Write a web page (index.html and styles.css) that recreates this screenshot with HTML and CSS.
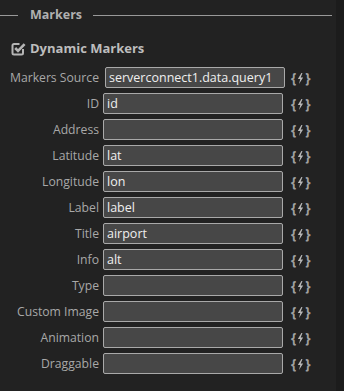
FILE: index.html
```html
<!DOCTYPE html>
<html>
<head>
	<meta charset="UTF-8">
	<title>Markers</title>
	<link rel="stylesheet" href="styles.css">
</head>
<body>
	<div class="panel">
		<fieldset class="group">
			<legend>Markers</legend>
			<div class="toggle">
				<svg class="check" width="15" height="15" viewBox="0 0 15 15">
					<path d="M12 8v4a1.5 1.5 0 0 1-1.5 1.5H3A1.5 1.5 0 0 1 1.5 12V4.5A1.5 1.5 0 0 1 3 3h5.5" fill="none" stroke="#b5b5b5" stroke-width="2"/>
					<path d="M4.2 7l2.8 2.8L13.6 3.2" fill="none" stroke="#b5b5b5" stroke-width="2.6"/>
				</svg>
				<span>Dynamic Markers</span>
			</div>
			<div class="rows">
				<label class="first">Markers Source</label>
				<input class="first" type="text" value="serverconnect1.data.query1">
				<span class="bind">{<svg viewBox="0 0 6 10"><path d="M3.8 0L0.6 5.4h2.2L1.6 10 5.4 4.2H3.2L4.8 0z"/></svg>}</span>

				<label>ID</label>
				<input type="text" value="id">
				<span class="bind">{<svg viewBox="0 0 6 10"><path d="M3.8 0L0.6 5.4h2.2L1.6 10 5.4 4.2H3.2L4.8 0z"/></svg>}</span>

				<label>Address</label>
				<input type="text" value="">
				<span class="bind">{<svg viewBox="0 0 6 10"><path d="M3.8 0L0.6 5.4h2.2L1.6 10 5.4 4.2H3.2L4.8 0z"/></svg>}</span>

				<label>Latitude</label>
				<input type="text" value="lat">
				<span class="bind">{<svg viewBox="0 0 6 10"><path d="M3.8 0L0.6 5.4h2.2L1.6 10 5.4 4.2H3.2L4.8 0z"/></svg>}</span>

				<label>Longitude</label>
				<input type="text" value="lon">
				<span class="bind">{<svg viewBox="0 0 6 10"><path d="M3.8 0L0.6 5.4h2.2L1.6 10 5.4 4.2H3.2L4.8 0z"/></svg>}</span>

				<label>Label</label>
				<input type="text" value="label">
				<span class="bind">{<svg viewBox="0 0 6 10"><path d="M3.8 0L0.6 5.4h2.2L1.6 10 5.4 4.2H3.2L4.8 0z"/></svg>}</span>

				<label>Title</label>
				<input type="text" value="airport">
				<span class="bind">{<svg viewBox="0 0 6 10"><path d="M3.8 0L0.6 5.4h2.2L1.6 10 5.4 4.2H3.2L4.8 0z"/></svg>}</span>

				<label>Info</label>
				<input type="text" value="alt">
				<span class="bind">{<svg viewBox="0 0 6 10"><path d="M3.8 0L0.6 5.4h2.2L1.6 10 5.4 4.2H3.2L4.8 0z"/></svg>}</span>

				<label>Type</label>
				<input type="text" value="">
				<span class="bind">{<svg viewBox="0 0 6 10"><path d="M3.8 0L0.6 5.4h2.2L1.6 10 5.4 4.2H3.2L4.8 0z"/></svg>}</span>

				<label>Custom Image</label>
				<input type="text" value="">
				<span class="bind">{<svg viewBox="0 0 6 10"><path d="M3.8 0L0.6 5.4h2.2L1.6 10 5.4 4.2H3.2L4.8 0z"/></svg>}</span>

				<label>Animation</label>
				<input type="text" value="">
				<span class="bind">{<svg viewBox="0 0 6 10"><path d="M3.8 0L0.6 5.4h2.2L1.6 10 5.4 4.2H3.2L4.8 0z"/></svg>}</span>

				<label>Draggable</label>
				<input type="text" value="">
				<span class="bind">{<svg viewBox="0 0 6 10"><path d="M3.8 0L0.6 5.4h2.2L1.6 10 5.4 4.2H3.2L4.8 0z"/></svg>}</span>
			</div>
		</fieldset>
	</div>
	<div class="stripe"></div>
</body>
</html>
```

FILE: styles.css
```css
* {
	box-sizing: border-box;
}

html,
body {
	height: 100%;
}

body {
	margin: 0;
	display: flex;
	background: #222222;
	font-family: "Open Sans", "Noto Sans", sans-serif;
	color: #b8b8b8;
	overflow: hidden;
}

.panel {
	flex: 1;
	padding: 0 4px 0 0;
}

.stripe {
	width: 8px;
	background: #1c1c1c;
}

.group {
	margin: 8px 0 0 0;
	padding: 0;
	border: 0;
	border-top: 1px solid #999;
}

.group legend {
	margin-left: 18px;
	padding: 0 11px 0 12px;
	font-size: 12.5px;
	font-weight: bold;
	color: #b0b0b0;
	line-height: 14px;
}

.toggle {
	display: flex;
	align-items: center;
	gap: 4px;
	margin: 17px 0 0 11px;
	font-size: 13px;
	font-weight: bold;
	color: #bdbdbd;
	height: 18px;
}

.rows {
	display: grid;
	grid-template-columns: 99px 180px auto;
	column-gap: 4px;
	row-gap: 5px;
	margin-top: 10px;
	align-items: center;
}

.rows label {
	text-align: right;
	font-size: 12.2px;
	color: #a8a8a8;
	white-space: nowrap;
}

.rows input {
	height: 21px;
	width: 180px;
	margin: 0;
	padding: 0 3px 1px;
	background: #474747;
	border: 1px solid #a9a9a9;
	border-radius: 2px;
	font-family: "Open Sans", "Noto Sans", sans-serif;
	font-size: 12.5px;
	color: #efefef;
	outline: none;
}

.rows input.first {
	margin-left: 2px;
}

.rows .bind {
	display: flex;
	align-items: center;
	padding-left: 4px;
	font-size: 13.5px;
	line-height: 14px;
	font-weight: bold;
	color: #a0a0a0;
}

.rows .bind svg {
	width: 7px;
	height: 11px;
	margin: 1px 1px 0;
	fill: #b8b8b8;
}
```
